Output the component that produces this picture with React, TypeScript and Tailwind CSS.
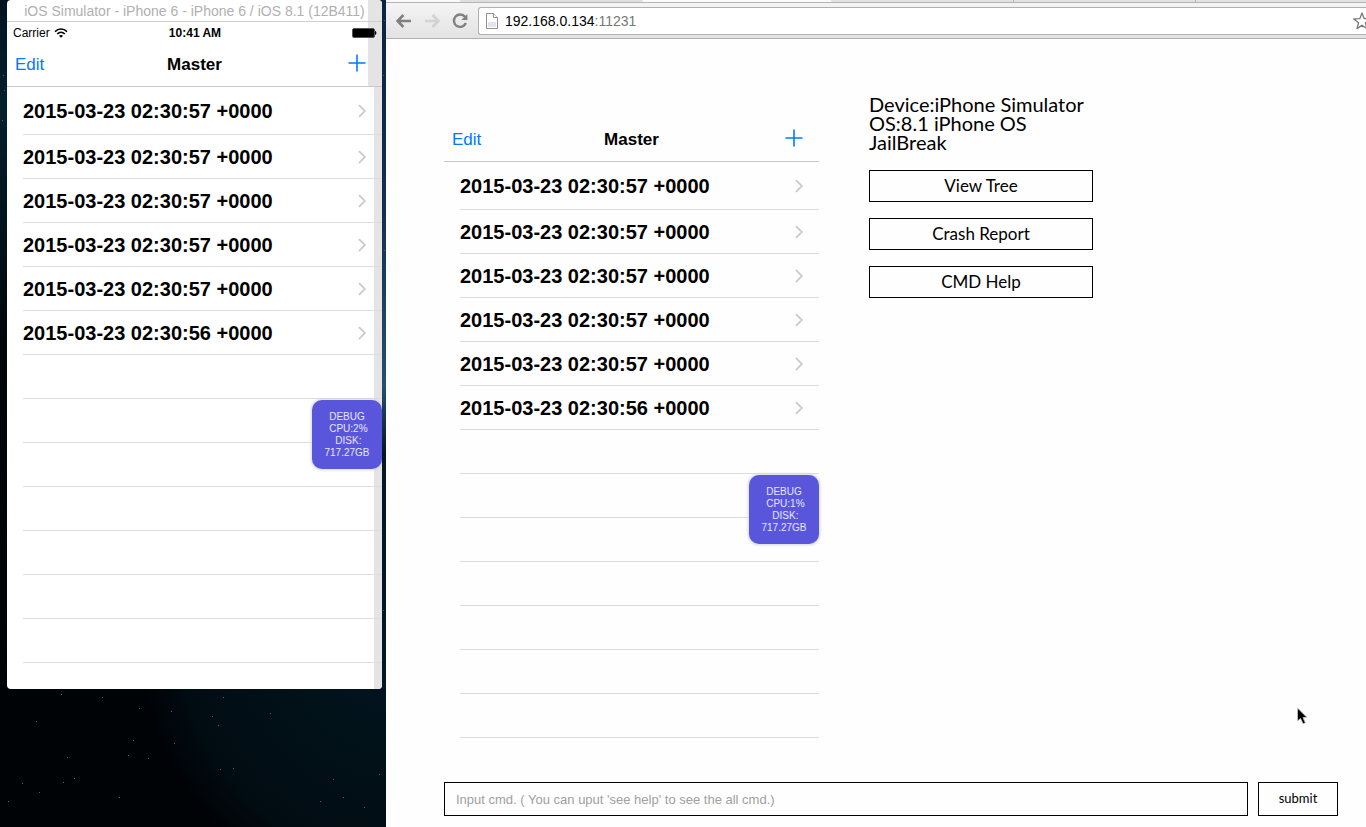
import React from "react";

const entries = [
  "2015-03-23 02:30:57 +0000",
  "2015-03-23 02:30:57 +0000",
  "2015-03-23 02:30:57 +0000",
  "2015-03-23 02:30:57 +0000",
  "2015-03-23 02:30:57 +0000",
  "2015-03-23 02:30:56 +0000",
];
const blankRows = 7;

const stars = [
  [61, 694], [36, 721], [102, 697], [139, 708], [171, 711], [218, 725], [223, 697], [212, 716], [270, 713],
  [133, 740], [174, 743], [67, 757], [128, 755], [148, 758], [220, 769], [233, 768], [22, 783], [39, 792],
  [8, 801], [63, 782], [74, 778], [119, 797], [343, 797], [333, 779], [364, 807], [379, 774], [320, 801],
  [3, 75], [4, 90], [2, 120], [384, 20], [383, 75], [384, 250], [383, 610],
];

function Plus() {
  return (
    <svg className="h-[18px] w-[18px]" viewBox="0 0 18 18" fill="none" stroke="#007aff" strokeWidth="1.6" aria-hidden="true">
      <path d="M9 0.5V17.5M0.5 9H17.5" />
    </svg>
  );
}

function Chevron() {
  return (
    <svg className="h-[14px] w-2 shrink-0" viewBox="0 0 8 14" fill="none" stroke="#c7c7cc" strokeWidth="1.7" aria-hidden="true">
      <path d="M1 1.2L6.8 7L1 12.8" />
    </svg>
  );
}

function DebugBadge({ cpu }: { cpu: string }) {
  return (
    <div className="absolute top-[313px] right-0 flex h-[69px] w-[70px] flex-col items-center justify-center rounded-[10px] bg-[#5a56dc] text-[10px] leading-3 whitespace-pre text-[#e6e6fa] shadow-[0_0_3px_1px_#d4d4dc]">
      <span>DEBUG</span>
      <span>{" CPU:" + cpu}</span>
      <span>{" DISK:"}</span>
      <span>717.27GB</span>
    </div>
  );
}

function MasterList({ cpu }: { cpu: string }) {
  return (
    <div>
      <header className="grid h-11 grid-cols-3 items-center border-b border-[#c8c8ca] px-2 text-[17px]">
        <button className="justify-self-start text-[#007aff]">Edit</button>
        <h1 className="justify-self-center font-bold">Master</h1>
        <button className="justify-self-end pr-2 pb-1" aria-label="Add">
          <Plus />
        </button>
      </header>
      <div className="relative">
        <ul className="pl-4">
          {entries.map((text, i) => (
            <li key={i} className="flex h-11 items-center justify-between border-b border-[#dcdcde] pr-4 text-xl font-bold first:h-12">
              <span>{text}</span>
              <Chevron />
            </li>
          ))}
          {Array.from({ length: blankRows }, (_, i) => (
            <li key={`blank-${i}`} className="h-11 border-b border-[#dcdcde]" />
          ))}
        </ul>
        <DebugBadge cpu={cpu} />
      </div>
    </div>
  );
}

function Simulator() {
  return (
    <section className="relative overflow-hidden rounded-[4px] bg-white pb-[26px]">
      <div className="absolute top-0 right-0 h-[87px] w-[14px] bg-[#e4e4e4]" />
      <div className="absolute top-[87px] right-0 bottom-0 w-2 bg-[#e4e4e4]" />
      <div className="relative">
        <div className="h-[22px] border-b border-[#cfcfcf] text-center text-sm leading-[22px] whitespace-nowrap text-[#b0b0b0]">
          iOS Simulator - iPhone 6 - iPhone 6 / iOS 8.1 (12B411)
        </div>
        <div className="grid h-[21px] grid-cols-3 items-center pr-[5px] pl-[6px] text-xs">
          <span className="flex items-center gap-1">
            Carrier
            <svg className="h-[10px] w-[14px]" viewBox="0 0 14 10" fill="none" stroke="#000" strokeWidth="1.5" aria-hidden="true">
              <path d="M1 3.6C4.4 0.2 9.6 0.2 13 3.6M3.2 6C5.4 3.8 8.6 3.8 10.8 6" />
              <path d="M7 9.8L5 7.7C6.2 6.7 7.8 6.7 9 7.7Z" fill="#000" stroke="none" />
            </svg>
          </span>
          <span className="justify-self-center font-bold">10:41 AM</span>
          <svg className="h-[10px] w-[25px] justify-self-end" viewBox="0 0 25 10" aria-hidden="true">
            <rect x="0.5" y="0.5" width="22" height="9" rx="1.5" fill="#000" stroke="#555" />
            <path d="M23 2.8Q26 5 23 7.2Z" fill="#000" />
          </svg>
        </div>
        <MasterList cpu="2%" />
      </div>
    </section>
  );
}

function Desktop() {
  return (
    <aside className="relative w-[386px] shrink-0 bg-[#000306] pr-1 pl-[7px]">
      <svg className="absolute inset-0 h-full w-full" aria-hidden="true">
        <defs>
          <radialGradient id="nebula" gradientUnits="userSpaceOnUse" cx="400" cy="640" r="260">
            <stop offset="0" stopColor="#021426" />
            <stop offset="0.4" stopColor="#021219" />
            <stop offset="0.85" stopColor="#010b12" />
            <stop offset="1" stopColor="#000306" />
          </radialGradient>
          <linearGradient id="edge" x1="0" y1="0" x2="0" y2="1">
            <stop offset="0" stopColor="#0a2340" />
            <stop offset="0.3" stopColor="#12304f" />
            <stop offset="0.56" stopColor="#245070" />
            <stop offset="0.66" stopColor="#041826" />
            <stop offset="1" stopColor="#03152a" />
          </linearGradient>
          <linearGradient id="leftEdge" x1="0" y1="0" x2="0" y2="1">
            <stop offset="0" stopColor="#02131f" />
            <stop offset="0.15" stopColor="#04202f" />
            <stop offset="0.5" stopColor="#00060a" />
            <stop offset="1" stopColor="#000306" />
          </linearGradient>
        </defs>
        <rect width="386" height="100%" fill="url(#nebula)" />
        <rect width="8" height="689" fill="url(#leftEdge)" />
        <rect x="378" width="8" height="689" fill="url(#edge)" />
        {stars.map(([x, y]) => (
          <rect key={`${x}-${y}`} x={x} y={y} width="1" height="1" fill="#4a626c" />
        ))}
      </svg>
      <Simulator />
    </aside>
  );
}

function Toolbar() {
  return (
    <div className="border-b border-[#b0b0b0] bg-linear-to-b from-[#f6f6f6] to-[#e3e3e3]">
      <div className="flex h-[3px] border-b border-[#b4b4b4] bg-[#fafafa]">
        <div className="w-[74px]" />
        <div className="w-[183px] rounded-br-[3px] bg-[#dedede]" />
        <div className="w-[188px]" />
        <div className="w-[182px] rounded-bl-[3px] bg-[#e2e2e2]" />
        <div className="w-[182px] border-l border-[#b4b4b4] bg-[#e2e2e2]" />
        <div className="flex-1 border-l border-[#b4b4b4] bg-[#e2e2e2]" />
      </div>
      <div className="flex h-[35px] items-center pl-[10px]">
        <button aria-label="Back">
          <svg className="h-[14px] w-4" viewBox="0 0 16 14" fill="none" stroke="#808080" strokeWidth="2.6" aria-hidden="true">
            <path d="M15 7H2M7.4 1L1.6 7L7.4 13" />
          </svg>
        </button>
        <button className="ml-3" aria-label="Forward">
          <svg className="h-[14px] w-4" viewBox="0 0 16 14" fill="none" stroke="#d2d2d2" strokeWidth="2.6" aria-hidden="true">
            <path d="M1 7H14M8.6 1L14.4 7L8.6 13" />
          </svg>
        </button>
        <button className="ml-3" aria-label="Reload">
          <svg className="h-4 w-4" viewBox="0 0 16 16" fill="none" aria-hidden="true">
            <path d="M13 3.8A6.2 6.2 0 1 0 13.9 10" stroke="#808080" strokeWidth="2.4" />
            <path d="M15.4 1V7H9.4Z" fill="#808080" />
          </svg>
        </button>
        <div className="ml-[10px] flex h-7 min-w-0 flex-1 items-center rounded-l-[3px] border border-r-0 border-[#b0b0b0] bg-white pl-[7px]">
          <svg className="h-4 w-3 shrink-0" viewBox="0 0 12 16" fill="#fff" stroke="#909090" aria-hidden="true">
            <path d="M0.5 0.5H7.5L11.5 4.5V15.5H0.5Z" />
            <path d="M7.5 0.5V4.5H11.5" />
            <path d="M2 9H10V14H2Z" fill="#e4e4ea" stroke="none" />
          </svg>
          <span className="ml-[7px] flex-1 text-sm">
            192.168.0.134<span className="text-[#777]">:11231</span>
          </span>
          <span className="w-[13px] shrink-0 overflow-hidden">
            <svg className="h-[18px] w-[18px]" viewBox="0 0 18 18" fill="#fff" stroke="#777" strokeWidth="1.3" strokeLinejoin="round" aria-hidden="true">
              <path d="M9 1L11.1 6.6L17.2 6.9L12.4 10.7L14 16.6L9 13.2L4 16.6L5.6 10.7L0.8 6.9L6.9 6.6Z" />
            </svg>
          </span>
        </div>
      </div>
    </div>
  );
}

export default function App() {
  return (
    <div className="flex min-h-screen bg-[#fefefe] font-['Liberation_Sans',Arial,sans-serif] text-black">
      <Desktop />
      <div className="flex min-w-0 flex-1 flex-col">
        <Toolbar />
        <main className="flex flex-1 flex-col pr-7 pb-[11px] pl-[58px]">
          <div className="flex items-start gap-[50px]">
            <section className="w-[375px] shrink-0 pt-[79px]">
              <MasterList cpu="1%" />
            </section>
            <section className="w-56 shrink-0 pt-14 font-['Century_Gothic',Lato,sans-serif]">
              <p className="text-xl leading-[19px] whitespace-nowrap">
                Device:iPhone Simulator
                <br />
                OS:8.1 iPhone OS
                <br />
                JailBreak
              </p>
              <div className="mt-[18px] flex flex-col gap-4">
                {["View Tree", "Crash Report", "CMD Help"].map((label) => (
                  <button key={label} className="h-8 border border-black text-[17px]">
                    {label}
                  </button>
                ))}
              </div>
            </section>
          </div>
          <form className="mt-auto flex gap-[10px]" onSubmit={(e) => e.preventDefault()}>
            <input
              type="text"
              aria-label="Command"
              placeholder="Input cmd. ( You can uput 'see help' to see the all cmd.)"
              className="h-[34px] min-w-0 flex-1 border border-black px-[11px] text-[13px] outline-none placeholder:text-[#a0a0a0]"
            />
            <button type="submit" className="h-[34px] w-20 border border-black font-['Century_Gothic',Lato,sans-serif] text-[13px]">
              submit
            </button>
          </form>
        </main>
      </div>
      <svg className="pointer-events-none fixed top-[707px] left-[1296px] h-[18px] w-3" viewBox="0 0 12 18" aria-hidden="true">
        <path d="M1.5 1L1.5 14L4.5 11.4L7 16.8L9.4 15.7L7 10.6L11 10.4Z" fill="#000" stroke="#ccc" strokeWidth="0.8" />
      </svg>
    </div>
  );
}
